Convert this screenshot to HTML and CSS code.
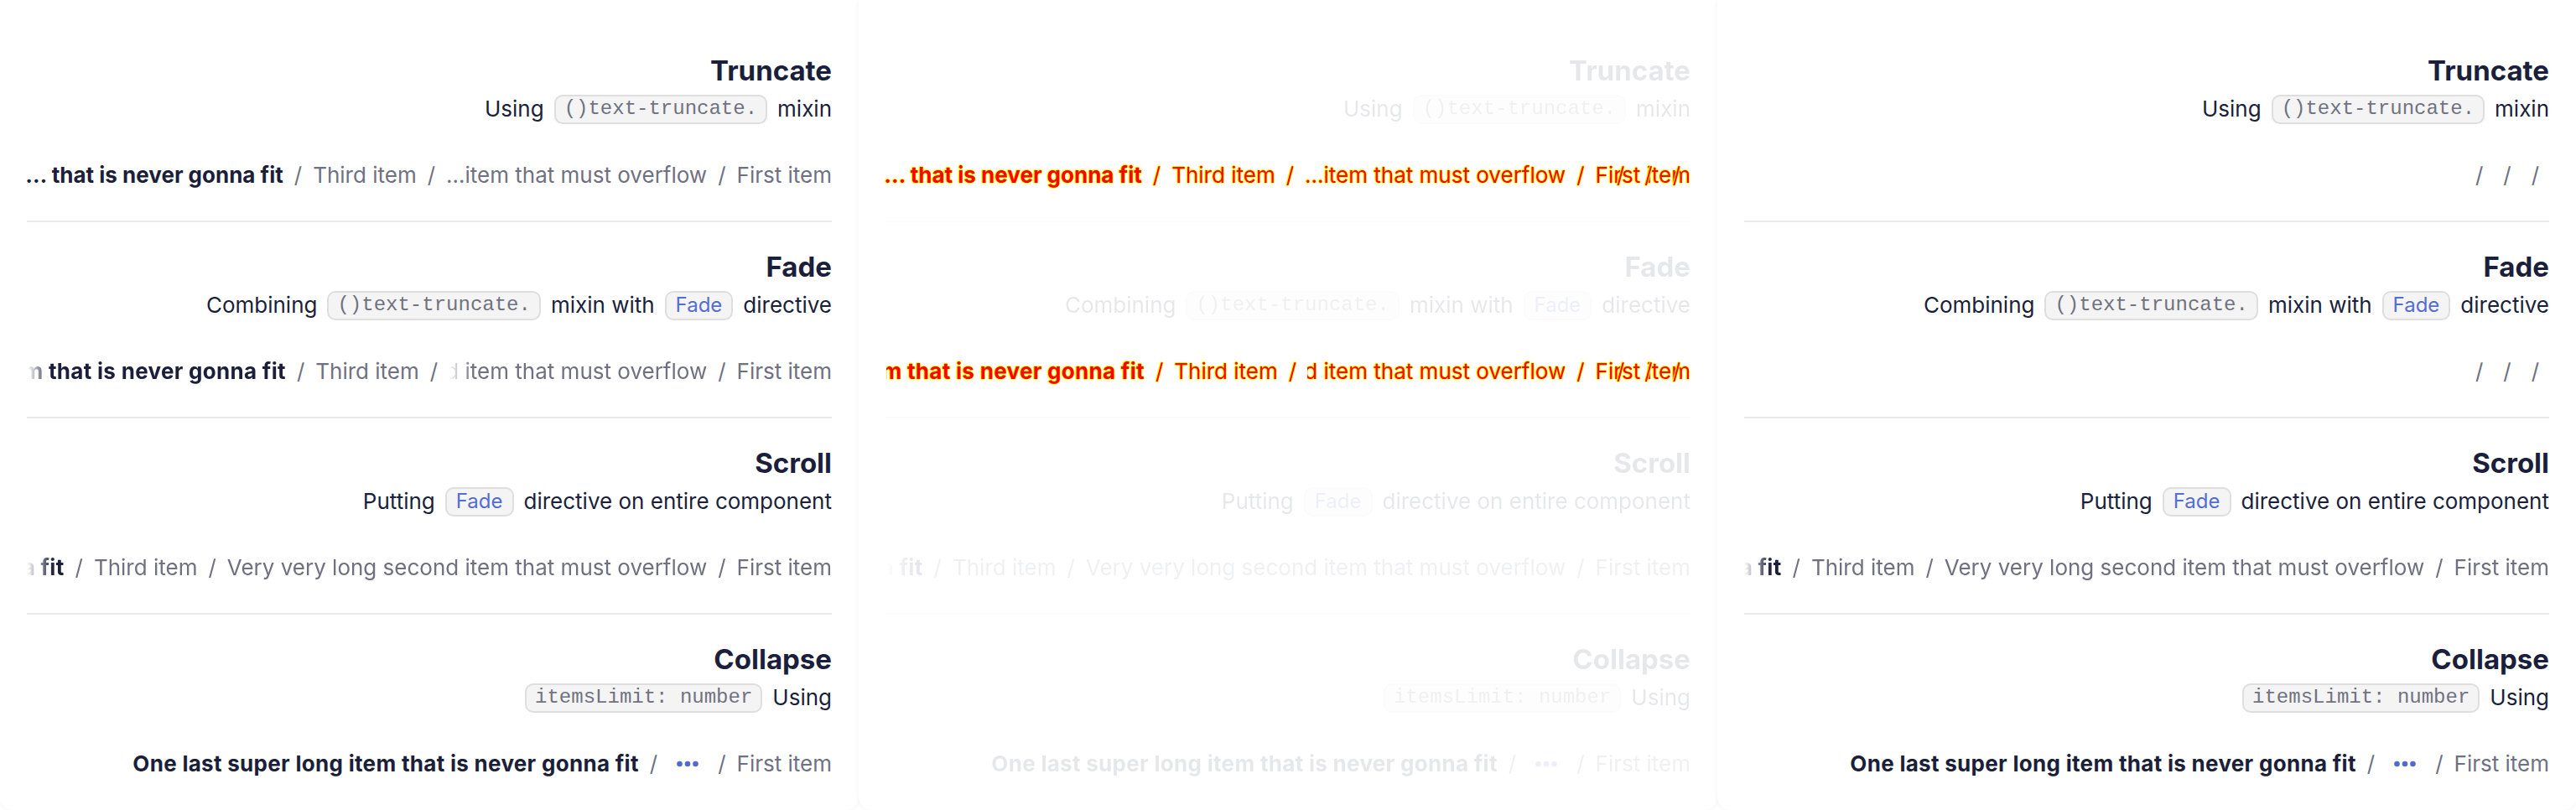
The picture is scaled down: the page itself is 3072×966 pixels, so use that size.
FILE: index.html
```html
<!DOCTYPE html>
<html lang="en">
<head>
<meta charset="utf-8">
<title>Breadcrumbs overflow</title>
<link rel="stylesheet" href="styles.css">
</head>
<body>
<main class="page">

  <!-- Panel 1 -->
  <section class="panel">
    <div class="demo">
      <div class="title">Truncate</div>
      <div class="desc"><span>Using</span><code class="chip">()text-truncate.</code><span>mixin</span></div>
      <nav class="crumbs">
        <span class="item last trunc">… that is never gonna fit</span>
        <span class="sep">/</span>
        <span class="item">Third item</span>
        <span class="sep">/</span>
        <span class="item trunc">…item that must overflow</span>
        <span class="sep">/</span>
        <span class="item">First item</span>
      </nav>
    </div>
    <div class="demo">
      <div class="title">Fade</div>
      <div class="desc"><span>Combining</span><code class="chip">()text-truncate.</code><span>mixin with</span><span class="chip link">Fade</span><span>directive</span></div>
      <nav class="crumbs">
        <span class="item last cut fade">One last super long item that is never gonna fit</span>
        <span class="sep">/</span>
        <span class="item">Third item</span>
        <span class="sep">/</span>
        <span class="item cut fade">Very very long second item that must overflow</span>
        <span class="sep">/</span>
        <span class="item">First item</span>
      </nav>
    </div>
    <div class="demo">
      <div class="title">Scroll</div>
      <div class="desc"><span>Putting</span><span class="chip link">Fade</span><span>directive on entire component</span></div>
      <nav class="crumbs scroll">
        <span class="item last">One last super long item that is never gonna fit</span>
        <span class="sep">/</span>
        <span class="item">Third item</span>
        <span class="sep">/</span>
        <span class="item">Very very long second item that must overflow</span>
        <span class="sep">/</span>
        <span class="item">First item</span>
      </nav>
    </div>
    <div class="demo">
      <div class="title">Collapse</div>
      <div class="desc"><code class="chip">itemsLimit: number</code><span>Using</span></div>
      <nav class="crumbs">
        <span class="item last">One last super long item that is never gonna fit</span>
        <span class="sep">/</span>
        <button class="more" type="button" aria-label="More"><svg width="26" height="8" viewBox="0 0 26 8"><circle cx="3.5" cy="4" r="3.3"/><circle cx="13" cy="4" r="3.3"/><circle cx="22.5" cy="4" r="3.3"/></svg></button>
        <span class="sep">/</span>
        <span class="item">First item</span>
      </nav>
    </div>
  </section>

  <!-- Panel 2 (diff) -->
  <section class="panel diff">
    <div class="demo">
      <div class="title ghost">Truncate</div>
      <div class="desc ghost"><span>Using</span><code class="chip">()text-truncate.</code><span>mixin</span></div>
      <nav class="crumbs red">
        <span class="item last trunc">… that is never gonna fit</span>
        <span class="sep">/</span>
        <span class="item">Third item</span>
        <span class="sep">/</span>
        <span class="item trunc">…item that must overflow</span>
        <span class="sep">/</span>
        <span class="item">First item</span>
        <span class="overlay"><span class="sep">/</span><span class="sep">/</span><span class="sep">/</span></span>
      </nav>
    </div>
    <div class="demo">
      <div class="title ghost">Fade</div>
      <div class="desc ghost"><span>Combining</span><code class="chip">()text-truncate.</code><span>mixin with</span><span class="chip link">Fade</span><span>directive</span></div>
      <nav class="crumbs red">
        <span class="item last cut">One last super long item that is never gonna fit</span>
        <span class="sep">/</span>
        <span class="item">Third item</span>
        <span class="sep">/</span>
        <span class="item cut">Very very long second item that must overflow</span>
        <span class="sep">/</span>
        <span class="item">First item</span>
        <span class="overlay"><span class="sep">/</span><span class="sep">/</span><span class="sep">/</span></span>
      </nav>
    </div>
    <div class="demo">
      <div class="title ghost">Scroll</div>
      <div class="desc ghost"><span>Putting</span><span class="chip link">Fade</span><span>directive on entire component</span></div>
      <nav class="crumbs scroll ghost">
        <span class="item last">One last super long item that is never gonna fit</span>
        <span class="sep">/</span>
        <span class="item">Third item</span>
        <span class="sep">/</span>
        <span class="item">Very very long second item that must overflow</span>
        <span class="sep">/</span>
        <span class="item">First item</span>
      </nav>
    </div>
    <div class="demo">
      <div class="title ghost">Collapse</div>
      <div class="desc ghost"><code class="chip">itemsLimit: number</code><span>Using</span></div>
      <nav class="crumbs ghost">
        <span class="item last">One last super long item that is never gonna fit</span>
        <span class="sep">/</span>
        <button class="more" type="button" aria-label="More"><svg width="26" height="8" viewBox="0 0 26 8"><circle cx="3.5" cy="4" r="3.3"/><circle cx="13" cy="4" r="3.3"/><circle cx="22.5" cy="4" r="3.3"/></svg></button>
        <span class="sep">/</span>
        <span class="item">First item</span>
      </nav>
    </div>
  </section>

  <!-- Panel 3 -->
  <section class="panel">
    <div class="demo">
      <div class="title">Truncate</div>
      <div class="desc"><span>Using</span><code class="chip">()text-truncate.</code><span>mixin</span></div>
      <nav class="crumbs empty">
        <span class="sep">/</span><span class="sep">/</span><span class="sep">/</span>
      </nav>
    </div>
    <div class="demo">
      <div class="title">Fade</div>
      <div class="desc"><span>Combining</span><code class="chip">()text-truncate.</code><span>mixin with</span><span class="chip link">Fade</span><span>directive</span></div>
      <nav class="crumbs empty">
        <span class="sep">/</span><span class="sep">/</span><span class="sep">/</span>
      </nav>
    </div>
    <div class="demo">
      <div class="title">Scroll</div>
      <div class="desc"><span>Putting</span><span class="chip link">Fade</span><span>directive on entire component</span></div>
      <nav class="crumbs scroll">
        <span class="item last">One last super long item that is never gonna fit</span>
        <span class="sep">/</span>
        <span class="item">Third item</span>
        <span class="sep">/</span>
        <span class="item">Very very long second item that must overflow</span>
        <span class="sep">/</span>
        <span class="item">First item</span>
      </nav>
    </div>
    <div class="demo">
      <div class="title">Collapse</div>
      <div class="desc"><code class="chip">itemsLimit: number</code><span>Using</span></div>
      <nav class="crumbs">
        <span class="item last">One last super long item that is never gonna fit</span>
        <span class="sep">/</span>
        <button class="more" type="button" aria-label="More"><svg width="26" height="8" viewBox="0 0 26 8"><circle cx="3.5" cy="4" r="3.3"/><circle cx="13" cy="4" r="3.3"/><circle cx="22.5" cy="4" r="3.3"/></svg></button>
        <span class="sep">/</span>
        <span class="item">First item</span>
      </nav>
    </div>
  </section>

</main>
</body>
</html>
```

FILE: styles.css
```css
* { box-sizing: border-box; }

html, body {
  margin: 0;
  padding: 0;
}

body {
  width: 3072px;
  height: 966px;
  overflow: hidden;
  background: #ffffff;
  font-family: Inter, "Noto Sans", sans-serif;
  color: #1b1f3b;
}

.page {
  display: flex;
  height: 966px;
}

.panel {
  flex: 0 0 1024px;
  width: 1024px;
  height: 966px;
  padding: 31px 32px 0;
  background: #ffffff;
  border-radius: 0 0 16px 16px;
  box-shadow: 0 0 6px rgba(0, 0, 0, 0.05);
  text-align: right;
  position: relative;
}

.demo {
  padding: 33px 0 34px;
  border-bottom: 2px solid #e9e9ea;
}

.demo:last-child {
  border-bottom: 0;
}

.title {
  font-size: 33px;
  line-height: 40px;
  font-weight: 700;
  color: #1b1f3b;
}

.desc {
  margin-top: 8px;
  height: 36px;
  display: flex;
  justify-content: flex-end;
  align-items: center;
  gap: 12px;
  font-size: 26px;
  line-height: 36px;
  white-space: nowrap;
  color: #1b1f3b;
}

.chip {
  display: inline-flex;
  align-items: center;
  height: 35px;
  padding: 0 10px;
  border: 2px solid #dedede;
  border-radius: 10px;
  background: #f4f4f5;
  font-family: "Liberation Mono", "DejaVu Sans Mono", monospace;
  font-size: 24px;
  color: #70727f;
}

.chip.link {
  font-family: Inter, "Noto Sans", sans-serif;
  color: #526ed3;
  padding: 0 11px;
}

.crumbs {
  margin-top: 41px;
  height: 40px;
  display: flex;
  justify-content: flex-end;
  align-items: center;
  font-size: 26px;
  line-height: 40px;
  white-space: nowrap;
  position: relative;
}

.item {
  flex-shrink: 0;
  color: #6f7182;
}

.item.last {
  color: #1b1f3b;
  font-weight: 700;
  letter-spacing: 0.3px;
}

.sep {
  flex-shrink: 0;
  margin: 0 13px;
  color: #6f7182;
}

.crumbs.empty .sep {
  margin: 0 12px;
}

.trunc {
  display: block;
  direction: ltr;
}

.item.last.trunc {
  letter-spacing: 0;
}

.cut {
  display: block;
  width: 308px;
  overflow: hidden;
  direction: rtl;
}

.cut.fade {
  -webkit-mask-image: linear-gradient(to right, transparent 0, #000 28px);
  mask-image: linear-gradient(to right, transparent 0, #000 28px);
}

.crumbs.scroll {
  overflow: hidden;
  -webkit-mask-image: linear-gradient(to right, transparent 0, #000 32px);
  mask-image: linear-gradient(to right, transparent 0, #000 32px);
}

.more {
  flex-shrink: 0;
  width: 46px;
  height: 32px;
  padding: 0;
  border: 0;
  background: none;
  display: flex;
  align-items: center;
  justify-content: center;
  fill: #4f6bd0;
}

.ghost {
  opacity: 0.1;
}

.diff .demo {
  border-bottom-color: #fbfbfb;
}

.diff .demo:last-child {
  border-bottom: 0;
}

.crumbs.red .item,
.crumbs.red .sep {
  color: #ff0000;
  text-shadow: 1px 0 0 #ffff00, -1px 0 0 #ffff00, 0 1px 0 #ffff00, 0 -1px 0 #ffff00;
}

.overlay {
  position: absolute;
  inset: 0;
  display: flex;
  justify-content: flex-end;
  align-items: center;
}

.overlay .sep {
  margin: 0 12px;
}
```
